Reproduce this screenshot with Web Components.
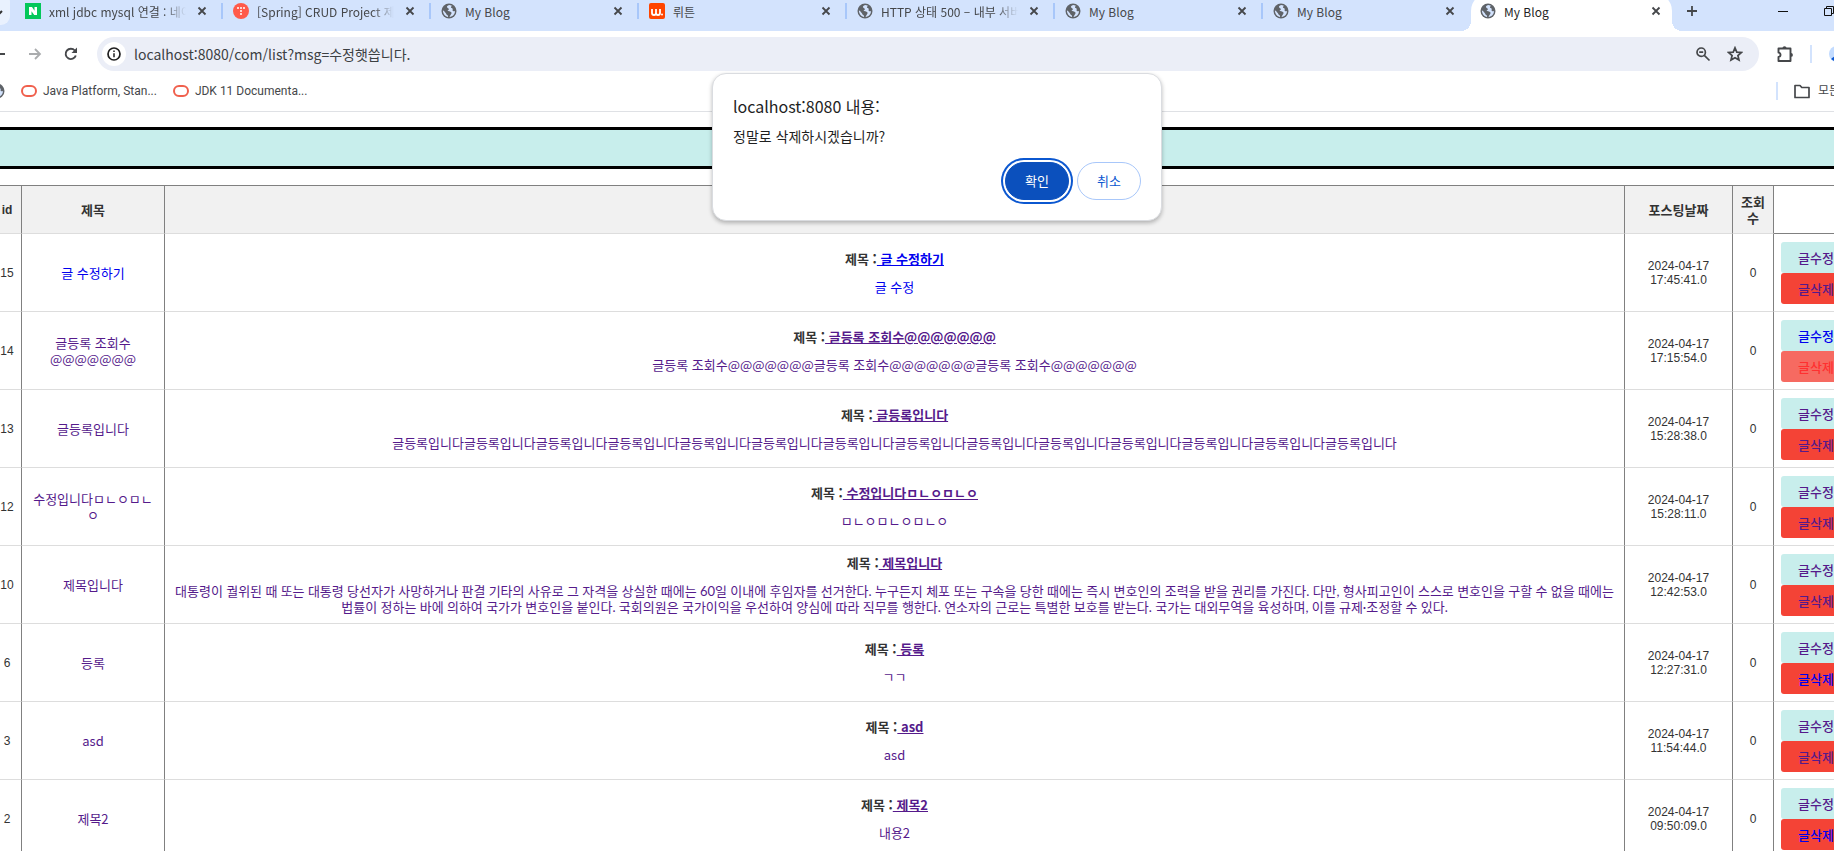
<!DOCTYPE html>
<html lang="ko">
<head>
<meta charset="utf-8">
<title>My Blog</title>
<style>
html,body{margin:0;background:#fff}
body{font-family:"Noto Sans CJK KR",sans-serif;font-size:13px;line-height:16px;color:#333;overflow:hidden}
</style>
</head>
<body>
<browser-window></browser-window>
<script>
const base = '*{box-sizing:border-box}a{text-decoration:none;color:inherit}button{font:inherit;color:inherit;background:none;border:0;padding:0;margin:0;display:grid;place-items:center}svg{display:block}';
const ICONS = {
  globe: '<circle cx="8" cy="8" r="7.500" fill="#5f6368"/><path d="M8.500 2C6 2.600 5.200 4 7 5.200 8.500 5.500 8 7 6.500 7.500 7 8.500 9.500 8 10.500 9.500 11 11 9 12 8.500 14c3.500-.5 5.500-3 5.500-6-1 .8-2.500.2-2.500-1C12.500 6 11 5 10 4.800 10 3.500 10.500 3 11 2.700zM1.900 7.500C2 11 4.500 13.700 7 14c.5-1.500-.5-2-1.500-2.500C5 10 4 9.500 3.500 8.500 3 7.800 2.500 7.500 1.900 7.500z" fill="#d3e3fd"/>',
  naver: '<path d="M0 0h16v16H0z" fill="#03c75a"/><path d="M4 4h3l2.500 3.800V4H12v8H9.200L6.500 8.200V12H4z" fill="#fff"/>',
  tistory: '<circle cx="8" cy="8" r="8" fill="#ff5a4a"/><g fill="#fff"><circle cx="5" cy="5" r="1"/><circle cx="8" cy="5" r="1"/><circle cx="11" cy="5" r="1"/><circle cx="8" cy="8" r="1"/><circle cx="8" cy="11" r="1"/></g>',
  wrtn: '<rect width="16" height="16" rx="2" fill="#ff4500"/><path d="M3 6v4q0 2 2 2t2-2V6v4q0 2 2 2t2-2V6" fill="none" stroke="#fff" stroke-width="1.800"/><circle cx="13" cy="11.500" r="1" fill="#fff"/>',
  close: '<path d="M4.500 4.500l7 7m0-7l-7 7" stroke="#45474a" stroke-width="1.800"/>',
  plus: '<path d="M8 3v10M3 8h10" stroke="#45474a" stroke-width="1.800"/>',
  min: '<path d="M3 8.500h10" stroke="#111"/>',
  restore: '<path d="M3.500 5.500h7v7h-7zM5.500 5.500v-2h7v7h-2" fill="none" stroke="#111"/>',
  caret: '<path d="M4 6l4 4 4-4" fill="none" stroke="#333" stroke-width="2"/>',
  back: '<path d="M14 8H3m5-5L3 8l5 5" fill="none" stroke="#45474a" stroke-width="1.800"/>',
  forward: '<path d="M2 8h11M8 3l5 5-5 5" fill="none" stroke="#aaacae" stroke-width="1.800"/>',
  reload: '<path d="M12.800 9.500A5.200 5.200 0 1 1 11.800 4.500L13 5.800" fill="none" stroke="#45474a" stroke-width="1.900"/><path d="M14 1.500v5.500H8.500z" fill="#45474a"/>',
  info: '<circle cx="8" cy="8" r="6" fill="none" stroke="#1f1f1f" stroke-width="1.700"/><path d="M8 7.200v4M8 4.500v1.600" stroke="#1f1f1f" stroke-width="1.500"/>',
  lens: '<circle cx="6.200" cy="6.200" r="4.200" fill="none" stroke="#45474a" stroke-width="1.700"/><path d="M9.300 9.300l5.200 5.200M4.200 6.200h4" stroke="#45474a" stroke-width="1.700"/>',
  star: '<path d="M8 1.800l1.800 4.300 4.600.4-3.500 3 1.100 4.600L8 11.700l-4 2.400 1.100-4.600-3.500-3 4.600-.4z" fill="none" stroke="#45474a" stroke-width="1.700"/>',
  puzzle: '<path d="M1.500 2.500h12v12.500h-12v-4q2-.2 2-2.200t-2-2.200z" fill="none" stroke="#45474a" stroke-width="1.900" stroke-linejoin="round"/><path d="M5.500 2a2 1.800 0 0 1 4 0zM14 7a1.900 1.900 0 0 1 0 3.800z" fill="#45474a"/>',
  avatar: '<circle cx="8" cy="8" r="8" fill="#c2dbff"/><circle cx="8" cy="6" r="3" fill="#0b57d0"/><path d="M2 13q6-6 12 0-6 5-12 0z" fill="#0b57d0"/>',
  oracle: '<rect x="1" y="3" width="14" height="10" rx="5" fill="none" stroke="#f0604d" stroke-width="2"/>',
  folder: '<path d="M1 2.500h5l1.800 2H15v10H1z" fill="none" stroke="#45474a" stroke-width="1.700" stroke-linejoin="round"/>'
};
function define(name, html, setup) {
  customElements.define(name, class extends HTMLElement {
    connectedCallback() {
      if (this.shadowRoot) return;
      const t = document.createElement('template');
      t.innerHTML = html;
      this.attachShadow({mode: 'open'}).append(t.content.cloneNode(true));
      if (setup) setup(this, this.shadowRoot);
    }
  });
}

define('ui-icon', '<style>:host{display:block;width:16px;height:16px;flex:none}svg{display:block;width:100%;height:100%}</style><svg viewBox="0 0 16 16" aria-hidden="true"></svg>',
  (el, root) => root.querySelector('svg').innerHTML = ICONS[el.getAttribute('name')]);

define('browser-tab', `<style>${base}
:host{display:flex;align-items:center;min-width:0;font-size:12px;line-height:20px;padding:0 11px 0 10px;border-right:2px solid #a8c7fa;height:16px;color:#45474a}
:host([last]){border-color:transparent}
:host([active]){border-color:transparent;color:#1f1f1f;padding:0 6px 0 9px}
.t{flex:1;min-width:0;white-space:nowrap;overflow:hidden;margin:2px 8px 0}
.fade{-webkit-mask-image:linear-gradient(90deg,#000 84%,transparent);mask-image:linear-gradient(90deg,#000 84%,transparent)}
</style><span class="i"></span><span class="t"><slot></slot></span><button aria-label="닫기"><ui-icon name="close"></ui-icon></button>`,
  (el, root) => {
    root.querySelector('.i').innerHTML = '<ui-icon name="' + el.getAttribute('icon') + '"></ui-icon>';
    if (el.hasAttribute('long')) root.querySelector('.t').classList.add('fade');
  });

define('tab-strip', `<style>${base}
:host{box-sizing:border-box;display:flex;height:31px;background:#d3e3fd;padding-top:3px;overflow:hidden}
.search{width:18px;height:32px;margin:-10px 5px 0 -8px;border-radius:10px;background:#e9f1fe;overflow:hidden}
.search ui-icon{margin:8px 0 0 -6px}
browser-tab{flex:0 0 208px}
.active{flex:0 0 201px;margin:-10px 0 0;padding-top:10px;background:#fff;border-radius:18px 18px 0 0;height:38px;position:relative}
.active::before,.active::after{content:"";position:absolute;bottom:0;width:10px;height:10px}
.active::before{right:100%;background:radial-gradient(circle at 0 0,transparent 10px,#fff 10px)}
.active::after{left:100%;background:radial-gradient(circle at 100% 0,transparent 10px,#fff 10px)}
.tabs{display:flex;flex:none}
.new{margin-left:12px;height:16px}
.win{margin-left:auto;display:flex;gap:30px;height:16px;margin-right:-3px}
</style><button class="search" aria-label="탭 검색"><ui-icon name="caret"></ui-icon></button>
<div class="tabs">
<browser-tab icon="naver" long>xml jdbc mysql 연결 : 네이버</browser-tab>
<browser-tab icon="tistory" long>[Spring] CRUD Project 제작</browser-tab>
<browser-tab icon="globe">My Blog</browser-tab>
<browser-tab icon="wrtn">뤼튼</browser-tab>
<browser-tab icon="globe" long>HTTP 상태 500 – 내부 서버</browser-tab>
<browser-tab icon="globe">My Blog</browser-tab>
<browser-tab icon="globe" last>My Blog</browser-tab>
</div>
<div class="active"><browser-tab icon="globe" active>My Blog</browser-tab></div>
<button class="new" aria-label="새 탭"><ui-icon name="plus"></ui-icon></button>
<div class="win"><button aria-label="최소화"><ui-icon name="min"></ui-icon></button><button aria-label="이전 크기로"><ui-icon name="restore"></ui-icon></button></div>`);

define('tool-bar', `<style>${base}
:host{display:flex;align-items:center;height:46px;overflow:hidden}
.nav{display:flex;gap:20px;margin-left:-9px;width:106px;flex:none}
.omni{flex:1;min-width:0;height:34px;border-radius:17px;background:#ebeef7;display:flex;align-items:center;padding:0 16px 0 5px}
.info{width:24px;height:24px;border-radius:12px;background:#fff}
input{flex:1;min-width:0;border:0;background:none;outline:0;font:inherit;font-size:14px;line-height:22px;height:24px;color:#3c4043;padding:0;margin:0 8px}
.in{display:flex;gap:16px}
.end{display:flex;align-items:center;gap:17px;margin:0 -11px 0 18px}
i{width:2px;height:18px;background:#d3e3fd}
</style><div class="nav"><button aria-label="뒤로"><ui-icon name="back"></ui-icon></button><button aria-label="앞으로"><ui-icon name="forward"></ui-icon></button><button aria-label="새로고침"><ui-icon name="reload"></ui-icon></button></div>
<div class="omni"><button class="info" aria-label="사이트 정보"><ui-icon name="info"></ui-icon></button><input aria-label="주소창" value="localhost:8080/com/list?msg=수정햇씁니다."><div class="in"><button aria-label="축소"><ui-icon name="lens"></ui-icon></button><button aria-label="북마크"><ui-icon name="star"></ui-icon></button></div></div>
<div class="end"><button aria-label="확장 프로그램"><ui-icon name="puzzle"></ui-icon></button><i></i><button aria-label="프로필"><ui-icon name="avatar"></ui-icon></button></div>`);

define('bookmark-bar', `<style>${base}
:host{box-sizing:border-box;display:flex;align-items:center;height:35px;padding:0 0 7px;border-bottom:1px solid #dfe1e5;font-family:Roboto,"Noto Sans CJK KR",sans-serif;font-size:12px;color:#45474a;overflow:hidden;white-space:nowrap}
a{display:flex;gap:6px;align-items:center;margin-right:16px}
.site{margin:0 16px 0 -11px}
.all{margin:0 -6px 0 0;padding-left:16px;border-left:2px solid #d3e3fd;height:18px;gap:8px}
.sp{flex:1}
</style><a class="site" href="#" aria-label="사이트"><ui-icon name="globe"></ui-icon></a><a href="#"><ui-icon name="oracle"></ui-icon>Java Platform, Stan...</a><a href="#"><ui-icon name="oracle"></ui-icon>JDK 11 Documenta...</a><span class="sp"></span><a class="all" href="#"><ui-icon name="folder"></ui-icon>모든</a>`);

define('confirm-dialog', `<style>${base}
:host{position:absolute;top:73px;left:calc(50% - 205px);width:450px;z-index:2}
dialog{position:static;width:100%;margin:0;padding:20px;border:1px solid #dadce0;border-radius:14px;background:#fff;color:#1f1f1f;box-shadow:0 2px 4px #0004}
h2{margin:0;font-size:16px;line-height:24px;font-weight:400}
p{margin:9px 0 17px;font-size:14px;line-height:18px}
.row{display:flex;justify-content:flex-end;gap:8px}
button{width:64px;height:38px;border-radius:19px;border:1px solid #a8c7fa;color:#0b57d0;font-size:13px}
.ok{background:#0b50bd;border-color:#0b50bd;color:#fff;box-shadow:0 0 0 2px #fff,0 0 0 4px #0b57d0}
</style><dialog open aria-label="확인"><h2>localhost:8080 내용:</h2><p>정말로 삭제하시겠습니까?</p><div class="row"><button class="ok">확인</button><button>취소</button></div></dialog>`);

const long = '대통령이 궐위된 때 또는 대통령 당선자가 사망하거나 판결 기타의 사유로 그 자격을 상실한 때에는 60일 이내에 후임자를 선거한다. 누구든지 체포 또는 구속을 당한 때에는 즉시 변호인의 조력을 받을 권리를 가진다. 다만, 형사피고인이 스스로 변호인을 구할 수 없을 때에는<br>법률이 정하는 바에 의하여 국가가 변호인을 붙인다. 국회의원은 국가이익을 우선하여 양심에 따라 직무를 행한다. 연소자의 근로는 특별한 보호를 받는다. 국가는 대외무역을 육성하며, 이를 규제·조정할 수 있다.';
const posts = [
  [15, '글 수정하기', '글 수정', '17:45:41.0', 'new'],
  [14, '글등록 조회수@@@@@@@', '글등록 조회수@@@@@@@'.repeat(3), '17:15:54.0', 'edit-new pressed'],
  [13, '글등록입니다', '글등록입니다'.repeat(14), '15:28:38.0', ''],
  [12, '수정입니다ㅁㄴㅇㅁㄴㅇ', 'ㅁㄴㅇㅁㄴㅇㅁㄴㅇ', '15:28:11.0', ''],
  [10, '제목입니다', long, '12:42:53.0', 'prose'],
  [6, '등록', 'ㄱㄱ', '12:27:31.0', 'del-new'],
  [3, 'asd', 'asd', '11:54:44.0', ''],
  [2, '제목2', '내용2', '09:50:09.0', 'del-new']
];
define('post-table', `<style>${base}
:host{display:block;margin:16px -30px 0 -7px}
table{width:100%;table-layout:fixed;border-collapse:separate;border-spacing:0;border-top:1px solid gray;text-align:center}
th,td{border-right:1px solid gray;border-bottom:1px solid #ddd;padding:0 8px;vertical-align:middle}
th{height:48px;background:#f1f1f1;font-weight:700}
th:last-child{background:#fff;border-bottom-color:gray}
td{height:78px}
th:first-child,.n{padding:0;font-family:"Liberation Sans",sans-serif;font-size:12px;line-height:14px}
a{color:#551a8b}
b a{text-decoration:underline}
p{margin:12px 0 0;white-space:nowrap}
.prose p{font-family:Lato,"Noto Sans CJK KR",sans-serif}
.new td:not(.act) a,.edit-new .edit,.del-new .del{color:#00e}
.act{padding:0 7px;text-align:left}
.act a{display:block;width:90px;height:31px;line-height:31px;padding-left:17px;border-radius:3px;background:#c8eeec;font-weight:500;white-space:nowrap;overflow:hidden}
.act .del{background:#f44336}
.pressed .del{background:#f66a61;color:#ff3030}
</style><table><colgroup><col style="width:29px"><col style="width:143px"><col><col style="width:108px"><col style="width:41px"><col style="width:90px"></colgroup>
<thead><tr><th>id</th><th>제목</th><th></th><th>포스팅날짜</th><th>조회수</th><th></th></tr></thead><tbody></tbody></table>`,
  (el, root) => root.querySelector('tbody').innerHTML = posts.map(([id, title, text, time, cls]) =>
    `<tr class="${cls}"><td class="n">${id}</td><td><a href="#">${title.replace('수@', '수<wbr>@')}</a></td><td><b>제목 :<a href="#"> ${title}</a></b><p><a href="#">${text}</a></p></td><td class="n">2024-04-17<br>${time}</td><td class="n">0</td><td class="act"><a class="edit" href="#">글수정</a><a class="del" href="#">글삭제</a></td></tr>`).join(''));

define('browser-window', `<style>${base}
:host{display:block;position:relative;height:100vh;overflow:hidden}
.banner{height:42px;margin-top:15px;background:#c8eeec;border:solid #000;border-width:3px 0}
</style><tab-strip></tab-strip><tool-bar></tool-bar><bookmark-bar></bookmark-bar>
<main><header class="banner"></header><post-table></post-table></main><confirm-dialog></confirm-dialog>`);
</script>
</body>
</html>
